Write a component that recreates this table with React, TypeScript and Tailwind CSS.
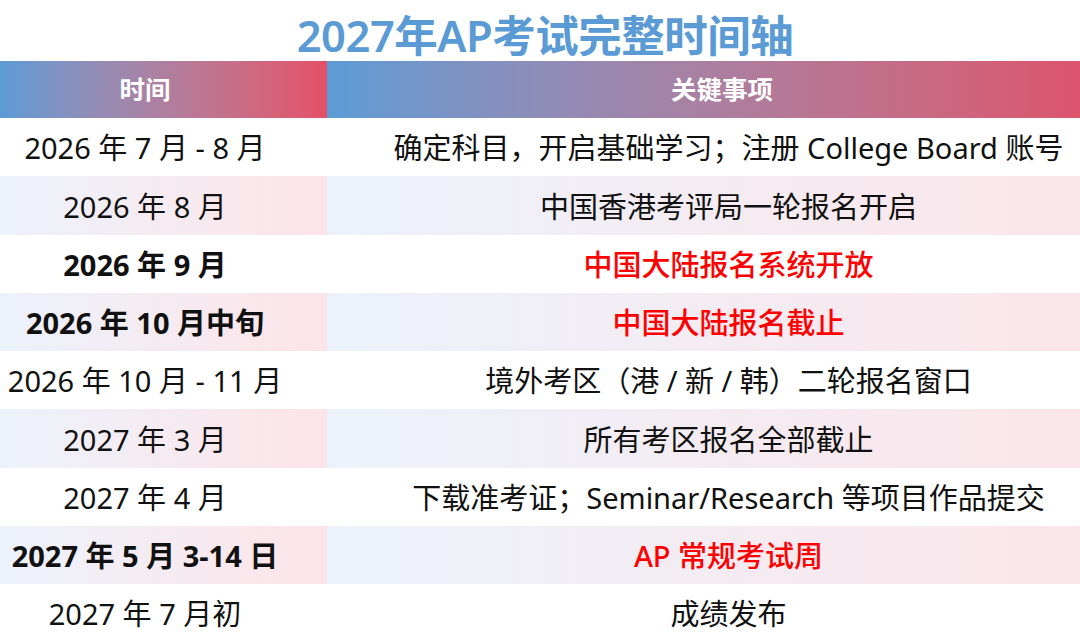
import React from "react";

type Row = { time: string; event: React.ReactNode; bold?: boolean; red?: boolean };

const rows: Row[] = [
  { time: "2026 年 7 月 - 8 月", event: "确定科目，开启基础学习；注册 College Board 账号" },
  { time: "2026 年 8 月", event: "中国香港考评局一轮报名开启" },
  { time: "2026 年 9 月", event: "中国大陆报名系统开放", bold: true, red: true },
  { time: "2026 年 10 月中旬", event: "中国大陆报名截止", bold: true, red: true },
  { time: "2026 年 10 月 - 11 月", event: "境外考区（港 / 新 / 韩）二轮报名窗口" },
  { time: "2027 年 3 月", event: "所有考区报名全部截止" },
  { time: "2027 年 4 月", event: "下载准考证；Seminar/Research 等项目作品提交" },
  { time: "2027 年 5 月 3-14 日", event: "AP 常规考试周", bold: true, red: true },
  { time: "2027 年 7 月初", event: "成绩发布" },
];

export default function App() {
  return (
    <div
      className="w-[1080px] h-[637px] overflow-hidden bg-white"
      style={{ fontFamily: '"Noto Sans", "Noto Sans CJK SC", sans-serif' }}
    >
      <div className="h-[61px] flex items-center justify-center pl-[10px]">
        <h1 className="text-[43.5px] leading-none font-semibold text-[#5b9bd5] tracking-[-0.5px] mt-[10px]">
          2027年AP考试完整时间轴
        </h1>
      </div>
      <div className="grid grid-cols-[327px_1fr]">
        <div className="h-[57px] flex items-center justify-center pr-[37px] bg-gradient-to-r from-[#5b9bd5] to-[#e44f66] text-white text-[25.5px] font-bold">
          时间
        </div>
        <div className="h-[57px] flex items-center justify-center pl-[37px] bg-gradient-to-r from-[#5b9bd5] to-[#db546c] text-white text-[25.5px] font-bold">
          关键事项
        </div>
        {rows.map((r, i) => {
          const shaded = i % 2 === 1;
          return (
            <React.Fragment key={i}>
              <div
                className={
                  "h-[58.25px] flex items-center justify-center pr-[37px] text-[29px] text-[#111] whitespace-nowrap pt-[2px] " +
                  (r.bold ? "font-bold " : "font-normal ") +
                  (shaded ? "bg-gradient-to-r from-[#ecf2fb] to-[#fde4e8]" : "bg-white")
                }
              >
                {r.time}
              </div>
              <div
                className={
                  "h-[58.25px] flex items-center justify-center pl-[50px] text-[29px] whitespace-nowrap pt-[2px] " +
                  (r.red ? "text-[#ff0000] font-medium " : "text-[#111] font-normal ") +
                  (shaded ? "bg-gradient-to-r from-[#ecf2fb] to-[#fbe6ea]" : "bg-white")
                }
              >
                {r.event}
              </div>
            </React.Fragment>
          );
        })}
      </div>
    </div>
  );
}
